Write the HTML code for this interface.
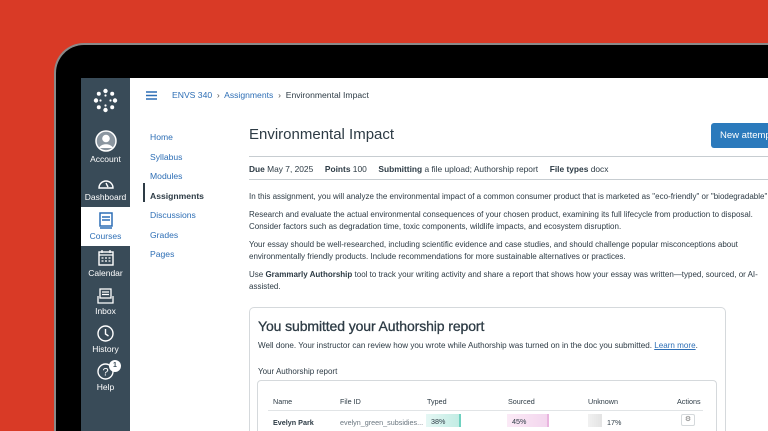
<!DOCTYPE html>
<html style="overflow:hidden;width:768px;height:431px"><head><style>
*{margin:0;padding:0;box-sizing:border-box}
body{width:768px;height:431px;overflow:hidden;background:#d93a26;font-family:"Liberation Sans",sans-serif;position:relative}
.bezel{position:absolute;left:54px;top:43px;width:714px;height:388px;background:#000;border:2px solid #8a8a8a;border-right:none;border-bottom:none;border-radius:30px 0 0 0}
.screen{position:absolute;left:81px;top:78px;width:687px;height:353px;background:#fff;overflow:hidden}
.side{position:absolute;left:0;top:0;width:49px;height:353px;background:#394b58;color:#fff;font-size:8.5px;text-align:center}
.nav{position:absolute;left:0;width:49px}
.nav svg{display:block;margin:0 auto 2px}
.act{background:#fff;color:#2d6eb5}
a,.lk{color:#2d6eb5;text-decoration:none}
.t{position:absolute;white-space:nowrap}
p{font-size:8px;color:#2d3b45;line-height:12.5px}
</style></head><body>
<div class="bezel"></div>
<div class="screen">
 <div class="side">
  <svg style="position:absolute;left:12px;top:10px" width="25" height="25" viewBox="0 0 25 25"><g fill="#fff"><circle cx="12.5" cy="3" r="2.2"/><circle cx="12.5" cy="22" r="2.2"/><circle cx="3" cy="12.5" r="2.2"/><circle cx="22" cy="12.5" r="2.2"/><circle cx="5.8" cy="5.8" r="2"/><circle cx="19.2" cy="5.8" r="2"/><circle cx="5.8" cy="19.2" r="2"/><circle cx="19.2" cy="19.2" r="2"/><circle cx="12.5" cy="7.5" r="1.1"/><circle cx="12.5" cy="17.5" r="1.1"/><circle cx="7.5" cy="12.5" r="1.1"/><circle cx="17.5" cy="12.5" r="1.1"/></g></svg>
  <div class="nav" style="top:52px"><svg width="22" height="22" viewBox="0 0 22 22"><circle cx="11" cy="11" r="10" fill="#8b96a0" stroke="#fff" stroke-width="1.5"/><circle cx="11" cy="8.5" r="3.8" fill="#fff"/><path d="M4 18c2-5 12-5 14 0" fill="#fff"/></svg>Account</div>
  <div class="nav" style="top:98px"><svg width="18" height="14" viewBox="0 0 18 14"><path d="M2 12A7 7 0 1 1 16 12Z" fill="none" stroke="#fff" stroke-width="1.4"/><path d="M9 7l2 4" stroke="#fff" stroke-width="1.4"/></svg>Dashboard</div>
  <div class="nav act" style="top:129px;height:39px;padding-top:5px"><svg width="14" height="17" viewBox="0 0 14 17"><rect x="1" y="1" width="12" height="13" fill="none" stroke="#2d6eb5" stroke-width="1.5"/><path d="M3 5h8M3 8h8M1 16h12" stroke="#2d6eb5" stroke-width="1.4"/></svg>Courses</div>
  <div class="nav" style="top:172px"><svg width="16" height="16" viewBox="0 0 16 16"><rect x="1" y="2" width="14" height="13" fill="none" stroke="#fff" stroke-width="1.4"/><path d="M1 5h14M4 0v3M12 0v3M3.5 8h2M7 8h2M10.5 8h2M3.5 11h2M7 11h2M10.5 11h2" stroke="#fff" stroke-width="1.3"/></svg>Calendar</div>
  <div class="nav" style="top:210px"><svg width="17" height="16" viewBox="0 0 17 16"><rect x="3" y="1" width="11" height="9" fill="none" stroke="#fff" stroke-width="1.3"/><path d="M1 8v7h15V8M5 4h7M5 6.5h7" stroke="#fff" stroke-width="1.3" fill="none"/></svg>Inbox</div>
  <div class="nav" style="top:247px"><svg width="17" height="17" viewBox="0 0 17 17"><circle cx="8.5" cy="8.5" r="7.5" fill="none" stroke="#fff" stroke-width="1.4"/><path d="M8.5 4v5l3 2" stroke="#fff" stroke-width="1.4" fill="none"/></svg>History</div>
  <div class="nav" style="top:285px"><svg width="17" height="17" viewBox="0 0 17 17"><circle cx="8.5" cy="8.5" r="7.5" fill="none" stroke="#fff" stroke-width="1.4"/><text x="8.5" y="12.5" font-size="11" fill="#fff" text-anchor="middle" font-family="Liberation Sans">?</text></svg>Help</div>
  <div style="position:absolute;left:28px;top:282px;width:12px;height:12px;border-radius:50%;background:#fff;color:#394b58;font-size:7px;font-weight:bold;line-height:12px">1</div>
 </div>
 <svg style="position:absolute;left:65px;top:13px" width="11" height="9"><path d="M0 1h11M0 4.5h11M0 8h11" stroke="#2d6eb5" stroke-width="1.5"/></svg>
 <div class="t" style="left:91px;top:12px;font-size:8.6px"><span class="lk">ENVS 340</span> <span style="color:#555">&nbsp;›&nbsp;</span> <span class="lk">Assignments</span> <span style="color:#555">&nbsp;›&nbsp;</span> <span style="color:#2d3b45">Environmental Impact</span></div>
 <div style="position:absolute;left:69px;top:50px;font-size:8.6px;line-height:19.5px">
  <div class="lk">Home</div><div class="lk">Syllabus</div><div class="lk">Modules</div><div style="color:#2d3b45;font-weight:bold">Assignments</div><div class="lk">Discussions</div><div class="lk">Grades</div><div class="lk">Pages</div>
 </div>
 <div style="position:absolute;left:62px;top:105px;width:2px;height:19px;background:#2d3b45"></div>
 <div class="t" style="left:168px;top:48px;font-size:15px;color:#2d3b45">Environmental Impact</div>
 <div class="t" style="left:630px;top:45px;width:57px;height:25px;background:#2b7abc;border-radius:3px 0 0 3px;color:#fff;font-size:9.5px;line-height:25px;padding-left:9px;overflow:hidden">New attempt</div>
 <div style="position:absolute;left:168px;top:78px;width:519px;border-top:1px solid #c7cdd1"></div>
 <div class="t" style="left:168px;top:86px;font-size:8.4px;color:#2d3b45"><b>Due</b> May 7, 2025 &nbsp;&nbsp;&nbsp;&nbsp;<b>Points</b> 100 &nbsp;&nbsp;&nbsp;&nbsp;<b>Submitting</b> a file upload; Authorship report &nbsp;&nbsp;&nbsp;&nbsp;<b>File types</b> docx</div>
 <div style="position:absolute;left:168px;top:101px;width:519px;border-top:1px solid #c7cdd1"></div>
 <div style="position:absolute;left:168px;top:113px;width:519px;overflow:hidden">
  <p style="margin-bottom:5px;white-space:nowrap">In this assignment, you will analyze the environmental impact of a common consumer product that is marketed as "eco-friendly" or "biodegradable".</p>
  <p style="margin-bottom:5px;white-space:nowrap">Research and evaluate the actual environmental consequences of your chosen product, examining its full lifecycle from production to disposal.<br>Consider factors such as degradation time, toxic components, wildlife impacts, and ecosystem disruption.</p>
  <p style="margin-bottom:5px;white-space:nowrap">Your essay should be well-researched, including scientific evidence and case studies, and should challenge popular misconceptions about<br>environmentally friendly products. Include recommendations for more sustainable alternatives or practices.</p>
  <p style="white-space:nowrap">Use <b>Grammarly Authorship</b> tool to track your writing activity and share a report that shows how your essay was written—typed, sourced, or AI-<br>assisted.</p>
 </div>
 <div style="position:absolute;left:168px;top:229px;width:477px;height:124px;border:1px solid #d5d9dc;border-bottom:none;border-radius:5px 5px 0 0"></div>
 <div class="t" style="left:177px;top:240px;font-size:14px;color:#2d3b45;letter-spacing:-.1px;-webkit-text-stroke:0.3px #2d3b45">You submitted your Authorship report</div>
 <div class="t" style="left:177px;top:263px;font-size:8.1px;color:#2d3b45">Well done. Your instructor can review how you wrote while Authorship was turned on in the doc you submitted. <span class="lk" style="text-decoration:underline">Learn more</span>.</div>
 <div class="t" style="left:177px;top:289px;font-size:8px;color:#2d3b45">Your Authorship report</div>
 <div style="position:absolute;left:176px;top:302px;width:460px;height:51px;border:1px solid #d5d9dc;border-bottom:none;border-radius:4px 4px 0 0"></div>
 <div class="t" style="left:192px;top:319px;font-size:7.2px;color:#2d3b45">Name</div>
 <div class="t" style="left:259px;top:319px;font-size:7.2px;color:#2d3b45">File ID</div>
 <div class="t" style="left:346px;top:319px;font-size:7.2px;color:#2d3b45">Typed</div>
 <div class="t" style="left:427px;top:319px;font-size:7.2px;color:#2d3b45">Sourced</div>
 <div class="t" style="left:507px;top:319px;font-size:7.2px;color:#2d3b45">Unknown</div>
 <div class="t" style="left:596px;top:319px;font-size:7.2px;color:#2d3b45">Actions</div>
 <div style="position:absolute;left:187px;top:332px;width:435px;border-top:1px solid #e1e4e6"></div>
 <div class="t" style="left:192px;top:340px;font-size:7.2px;color:#2d3b45;font-weight:bold">Evelyn Park</div>
 <div class="t" style="left:259px;top:340px;font-size:7.2px;color:#6b7780">evelyn_green_subsidies...</div>
 <div class="t" style="left:345px;top:336px;width:35px;height:13px;background:linear-gradient(90deg,#e5f7f4,#c2ece4);border-right:2px solid #6fd1c0;font-size:7.2px;color:#2d3b45;padding:3px 5px">38%</div>
 <div class="t" style="left:426px;top:336px;width:42px;height:13px;background:linear-gradient(90deg,#fbeaf6,#f3d6ee);border-right:2px solid #e9b5df;font-size:7.2px;color:#2d3b45;padding:3px 5px">45%</div>
 <div class="t" style="left:507px;top:336px;width:14px;height:13px;background:linear-gradient(90deg,#f1f1f1,#e3e3e3)"></div>
 <div class="t" style="left:526px;top:340px;font-size:7.2px;color:#2d3b45">17%</div>
 <div class="t" style="left:600px;top:336px;width:14px;height:12px;border:1px solid #d5d9dc;border-radius:2px;font-size:7px;color:#777;text-align:center;line-height:10px">⚙</div>
</div>
</body></html>
